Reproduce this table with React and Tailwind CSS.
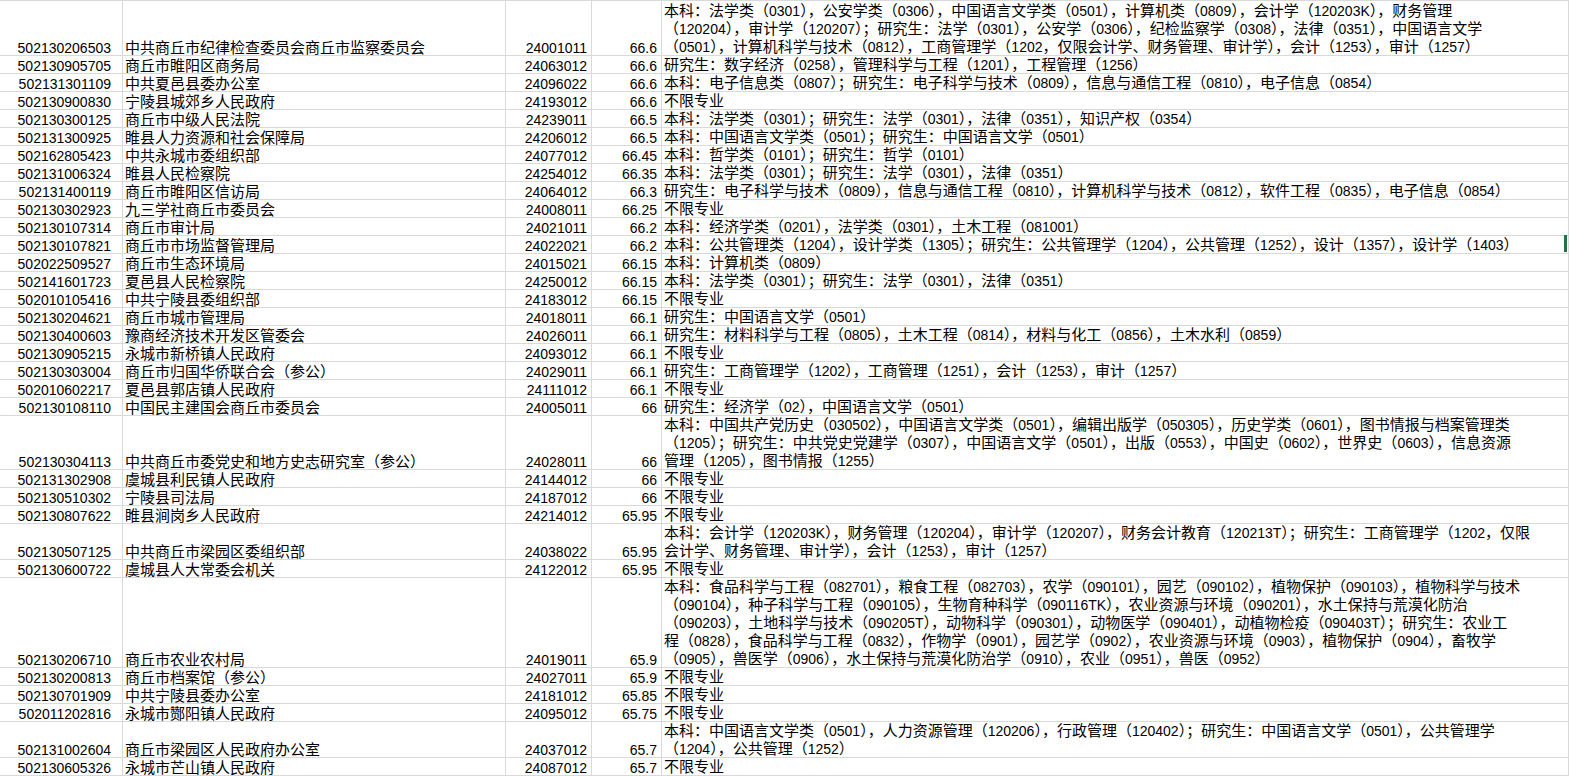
import React from "react";

// height classes for 1..5 wrapped lines
const H = { 1: "h-[18px]", 2: "h-[36px]", 3: "h-[54px]", 4: "h-[72px]", 5: "h-[90px]" };
const NONE = ["不限专业"];

const rows = [
  ["502130206503", "中共商丘市纪律检查委员会商丘市监察委员会", "24001011", "66.6", [
    "本科：法学类（0301），公安学类（0306），中国语言文学类（0501），计算机类（0809），会计学（120203K），财务管理",
    "（120204），审计学（120207）；研究生：法学（0301），公安学（0306），纪检监察学（0308），法律（0351），中国语言文学",
    "（0501），计算机科学与技术（0812），工商管理学（1202，仅限会计学、财务管理、审计学），会计（1253），审计（1257）",
  ]],
  ["502130905705", "商丘市睢阳区商务局", "24063012", "66.6", ["研究生：数字经济（0258），管理科学与工程（1201），工程管理（1256）"]],
  ["502131301109", "中共夏邑县委办公室", "24096022", "66.6", ["本科：电子信息类（0807）；研究生：电子科学与技术（0809），信息与通信工程（0810），电子信息（0854）"]],
  ["502130900830", "宁陵县城郊乡人民政府", "24193012", "66.6", NONE],
  ["502130300125", "商丘市中级人民法院", "24239011", "66.5", ["本科：法学类（0301）；研究生：法学（0301），法律（0351），知识产权（0354）"]],
  ["502131300925", "睢县人力资源和社会保障局", "24206012", "66.5", ["本科：中国语言文学类（0501）；研究生：中国语言文学（0501）"]],
  ["502162805423", "中共永城市委组织部", "24077012", "66.45", ["本科：哲学类（0101）；研究生：哲学（0101）"]],
  ["502131006324", "睢县人民检察院", "24254012", "66.35", ["本科：法学类（0301）；研究生：法学（0301），法律（0351）"]],
  ["502131400119", "商丘市睢阳区信访局", "24064012", "66.3", ["研究生：电子科学与技术（0809），信息与通信工程（0810），计算机科学与技术（0812），软件工程（0835），电子信息（0854）"]],
  ["502130302923", "九三学社商丘市委员会", "24008011", "66.25", NONE],
  ["502130107314", "商丘市审计局", "24021011", "66.2", ["本科：经济学类（0201），法学类（0301），土木工程（081001）"]],
  ["502130107821", "商丘市市场监督管理局", "24022021", "66.2", ["本科：公共管理类（1204），设计学类（1305）；研究生：公共管理学（1204），公共管理（1252），设计（1357），设计学（1403）"]],
  ["502022509527", "商丘市生态环境局", "24015021", "66.15", ["本科：计算机类（0809）"]],
  ["502141601723", "夏邑县人民检察院", "24250012", "66.15", ["本科：法学类（0301）；研究生：法学（0301），法律（0351）"]],
  ["502010105416", "中共宁陵县委组织部", "24183012", "66.15", NONE],
  ["502130204621", "商丘市城市管理局", "24018011", "66.1", ["研究生：中国语言文学（0501）"]],
  ["502130400603", "豫商经济技术开发区管委会", "24026011", "66.1", ["研究生：材料科学与工程（0805），土木工程（0814），材料与化工（0856），土木水利（0859）"]],
  ["502130905215", "永城市新桥镇人民政府", "24093012", "66.1", NONE],
  ["502130303004", "商丘市归国华侨联合会（参公）", "24029011", "66.1", ["研究生：工商管理学（1202），工商管理（1251），会计（1253），审计（1257）"]],
  ["502010602217", "夏邑县郭店镇人民政府", "24111012", "66.1", NONE],
  ["502130108110", "中国民主建国会商丘市委员会", "24005011", "66", ["研究生：经济学（02），中国语言文学（0501）"]],
  ["502130304113", "中共商丘市委党史和地方史志研究室（参公）", "24028011", "66", [
    "本科：中国共产党历史（030502），中国语言文学类（0501），编辑出版学（050305），历史学类（0601），图书情报与档案管理类",
    "（1205）；研究生：中共党史党建学（0307），中国语言文学（0501），出版（0553），中国史（0602），世界史（0603），信息资源",
    "管理（1205），图书情报（1255）",
  ]],
  ["502131302908", "虞城县利民镇人民政府", "24144012", "66", NONE],
  ["502130510302", "宁陵县司法局", "24187012", "66", NONE],
  ["502130807622", "睢县涧岗乡人民政府", "24214012", "65.95", NONE],
  ["502130507125", "中共商丘市梁园区委组织部", "24038022", "65.95", [
    "本科：会计学（120203K），财务管理（120204），审计学（120207），财务会计教育（120213T）；研究生：工商管理学（1202，仅限",
    "会计学、财务管理、审计学），会计（1253），审计（1257）",
  ]],
  ["502130600722", "虞城县人大常委会机关", "24122012", "65.95", NONE],
  ["502130206710", "商丘市农业农村局", "24019011", "65.9", [
    "本科：食品科学与工程（082701），粮食工程（082703），农学（090101），园艺（090102），植物保护（090103），植物科学与技术",
    "（090104），种子科学与工程（090105），生物育种科学（090116TK），农业资源与环境（090201），水土保持与荒漠化防治",
    "（090203），土地科学与技术（090205T），动物科学（090301），动物医学（090401），动植物检疫（090403T）；研究生：农业工",
    "程（0828），食品科学与工程（0832），作物学（0901），园艺学（0902），农业资源与环境（0903），植物保护（0904），畜牧学",
    "（0905），兽医学（0906），水土保持与荒漠化防治学（0910），农业（0951），兽医（0952）",
  ]],
  ["502130200813", "商丘市档案馆（参公）", "24027011", "65.9", NONE],
  ["502130701909", "中共宁陵县委办公室", "24181012", "65.85", NONE],
  ["502011202816", "永城市酂阳镇人民政府", "24095012", "65.75", NONE],
  ["502131002604", "商丘市梁园区人民政府办公室", "24037012", "65.7", [
    "本科：中国语言文学类（0501），人力资源管理（120206），行政管理（120402）；研究生：中国语言文学（0501），公共管理学",
    "（1204），公共管理（1252）",
  ]],
  ["502130605326", "永城市芒山镇人民政府", "24087012", "65.7", NONE],
];

// ascii runs get a narrower latin face so they sit at half width like the original
function Mixed({ text }) {
  return text.split(/([0-9A-Za-z.]+)/).map((part, i) =>
    /^[0-9A-Za-z.]+$/.test(part) ? (
      <span key={i} className="font-['Liberation_Sans',sans-serif] text-[14px] leading-[14px]">{part}</span>
    ) : (
      <React.Fragment key={i}>{part}</React.Fragment>
    )
  );
}

const cell = "border-r border-b border-[#d9d9d9] whitespace-nowrap";
const num = "flex items-end justify-end font-['Liberation_Sans',sans-serif] text-[14px] leading-[14px]";

function Row({ r }) {
  const [id, name, code, score, lines] = r;
  const h = H[lines.length];
  return (
    <div className={`grid grid-cols-[123px_383px_86px_70px_1fr] ${h}`}>
      <div className={`${cell} ${num} pr-[11px]`}>{id}</div>
      <div className={`${cell} flex items-end pl-[2px] text-[15px] leading-[16px]`}>{name}</div>
      <div className={`${cell} ${num} pr-[4px]`}>{code}</div>
      <div className={`${cell} ${num} pr-[4px]`}>{score}</div>
      <div className={`${cell} pl-[2px] text-[15px]`}>
        {lines.map((l, i) => (
          <div key={i} className="h-[18px] leading-[18px]">
            <Mixed text={l} />
          </div>
        ))}
      </div>
    </div>
  );
}

export default function App() {
  return (
    <div className="relative w-[1569px] h-[776px] overflow-hidden bg-white text-black font-['Noto_Sans_CJK_SC',sans-serif]">
      <div className="border-t border-[#d9d9d9]">
        {rows.map((r) => (
          <Row key={r[0]} r={r} />
        ))}
      </div>
      {/* excel's little green marker at the right edge */}
      <div className="absolute right-[2px] top-[235px] w-[3px] h-[17px] bg-[#217346]" />
    </div>
  );
}
